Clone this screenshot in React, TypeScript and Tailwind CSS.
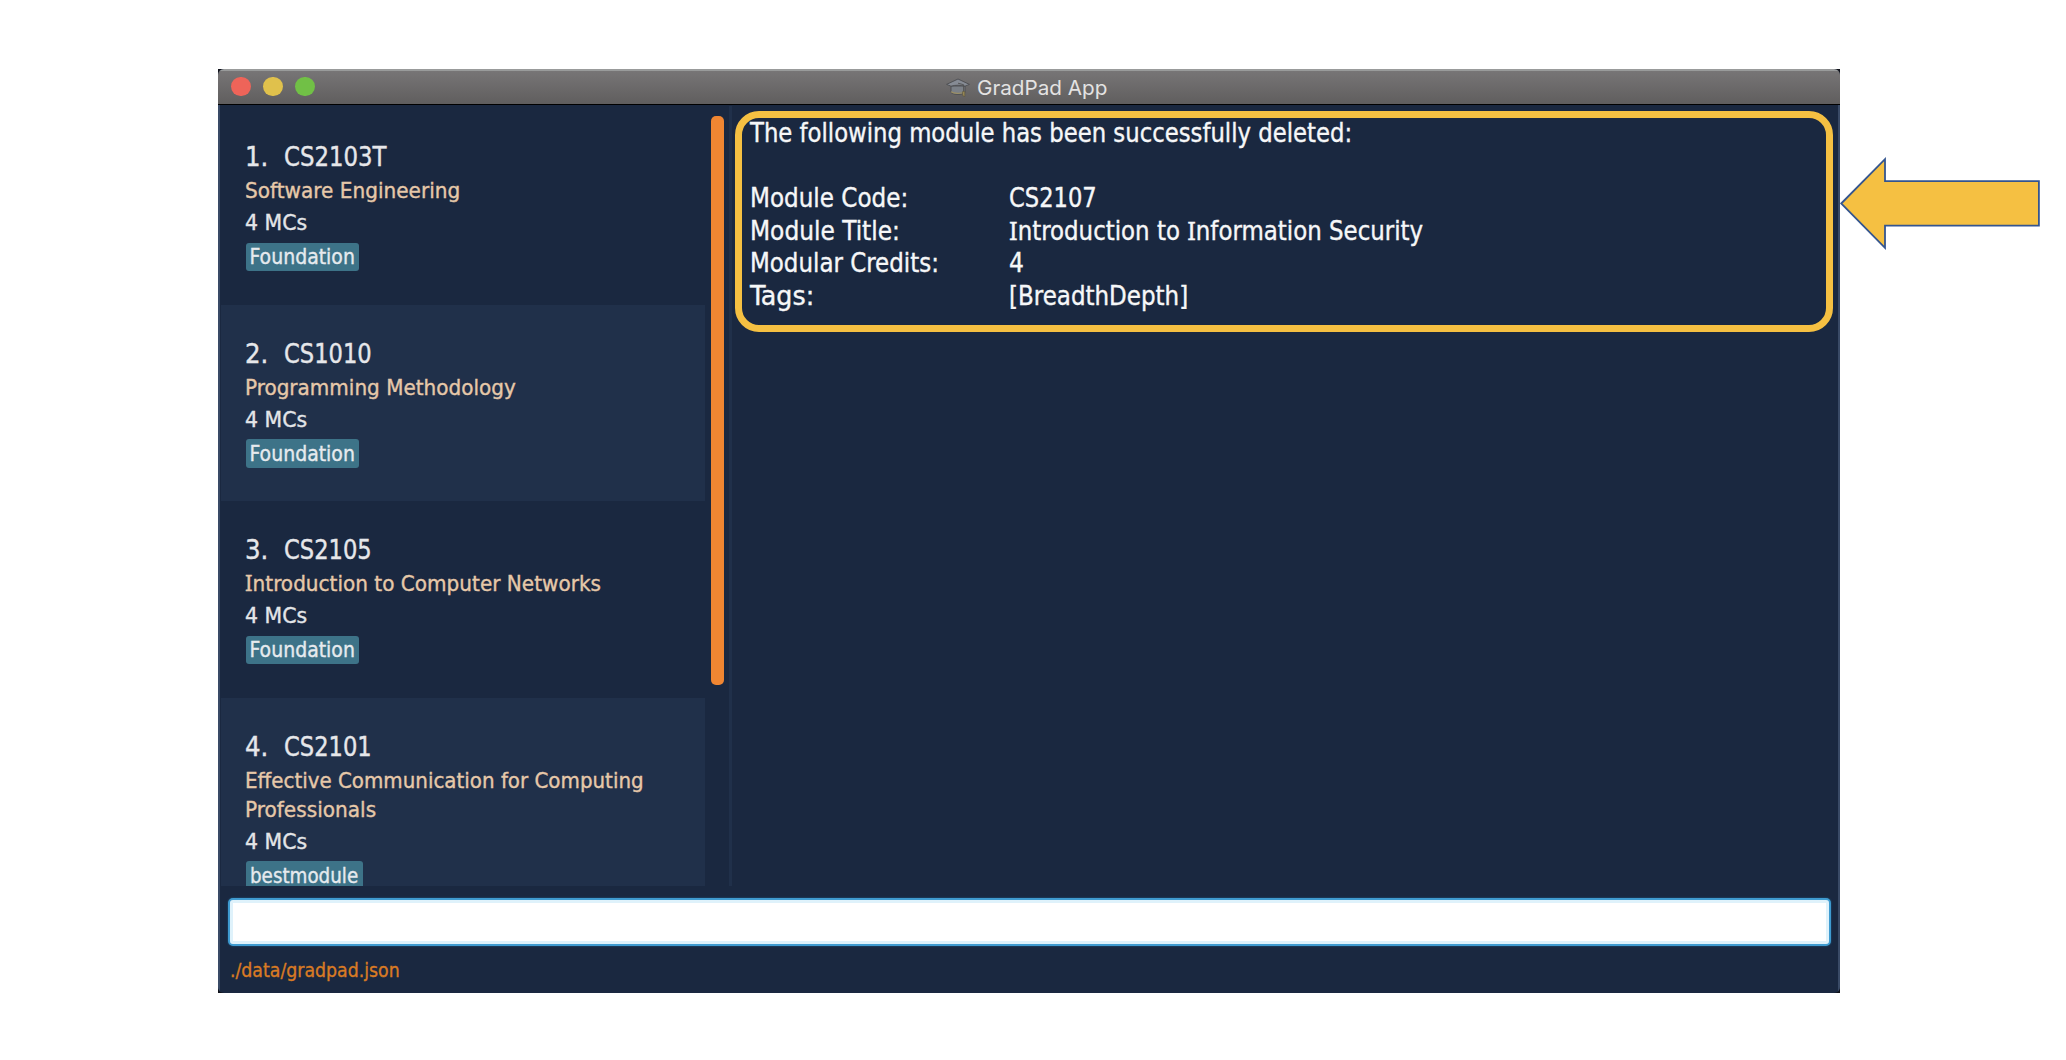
import { useLayoutEffect, useRef, useState } from "react";
import type { ReactNode } from "react";

/** Text squeezed or stretched horizontally to an exact advance width. */
function Fit({ width, children }: { width: number; children: ReactNode }) {
  const ref = useRef<HTMLSpanElement>(null);
  const [scale, setScale] = useState(1);
  useLayoutEffect(() => {
    if (ref.current) setScale(width / ref.current.offsetWidth);
  }, [width]);
  return (
    <span className="block whitespace-nowrap" style={{ width }}>
      <span ref={ref} className="inline-block origin-left whitespace-pre" style={{ transform: `scaleX(${scale})` }}>
        {children}
      </span>
    </span>
  );
}

const SerifI = () => <span className="font-['Noto_Sans'] leading-none">I</span>;

type Line = { text: ReactNode; width: number };
type Module = { index: string; code: Line; title: Line[]; tag: Line; tagWidth: string };

const modules: Module[] = [
  {
    index: "1.",
    code: { text: "CS2103T", width: 102.5 },
    title: [{ text: "Software Engineering", width: 215 }],
    tag: { text: "Foundation", width: 105 },
    tagWidth: "w-[113.5px]",
  },
  {
    index: "2.",
    code: { text: "CS1010", width: 88 },
    title: [{ text: "Programming Methodology", width: 271 }],
    tag: { text: "Foundation", width: 105 },
    tagWidth: "w-[113.5px]",
  },
  {
    index: "3.",
    code: { text: "CS2105", width: 88 },
    title: [{ text: <><SerifI />ntroduction to Computer Networks</>, width: 356.5 }],
    tag: { text: "Foundation", width: 105 },
    tagWidth: "w-[113.5px]",
  },
  {
    index: "4.",
    code: { text: "CS2101", width: 88 },
    title: [
      { text: "Effective Communication for Computing", width: 398.5 },
      { text: "Professionals", width: 131 },
    ],
    tag: { text: "bestmodule", width: 108.5 },
    tagWidth: "w-[117.5px]",
  },
];

const result: { label: Line; value: Line }[] = [
  { label: { text: "Module Code:", width: 158 }, value: { text: "CS2107", width: 88 } },
  {
    label: { text: "Module Title:", width: 149.5 },
    value: { text: <><SerifI />ntroduction to <SerifI />nformation Security</>, width: 414.5 },
  },
  { label: { text: "Modular Credits:", width: 188.5 }, value: { text: "4", width: 15 } },
  { label: { text: "Tags:", width: 64 }, value: { text: "[BreadthDepth]", width: 179 } },
];

function Card({ m, shaded }: { m: Module; shaded: boolean }) {
  return (
    <div
      className={`h-[196.5px] shrink-0 pl-[24px] pt-[33.3px] last:h-[226px] ${shaded ? "bg-[#20304a]" : "bg-[#1a2840]"}`}
    >
      <div className="flex h-8 text-[26px] leading-8 text-[#e6e7ea]">
        <div className="w-[38.5px]">
          <Fit width={23}>{m.index}</Fit>
        </div>
        <Fit width={m.code.width}>{m.code.text}</Fit>
      </div>
      <div className="mt-[3px] text-[22px] leading-[29.3px] text-[#e6c8a9]">
        {m.title.map((l, i) => (
          <div key={i} className="h-[29.3px]">
            <Fit width={l.width}>{l.text}</Fit>
          </div>
        ))}
      </div>
      <div className="mt-[2.9px] h-[29px] text-[22px] leading-[29px] text-[#e3e5e8]">
        <Fit width={62}>4 MCs</Fit>
      </div>
      <div
        className={`ml-[0.5px] mt-[5.2px] h-[28.7px] rounded-[3px] bg-[#3d7388] pl-[4px] pt-[0.8px] text-[21px] leading-[28.7px] text-[#e6eaee] ${m.tagWidth}`}
      >
        <Fit width={m.tag.width}>{m.tag.text}</Fit>
      </div>
    </div>
  );
}

function CapIcon() {
  return (
    <svg viewBox="0 0 24 20" className="h-[20px] w-[24px]">
      <path d="M5 8v6.5c3 2.6 11 2.6 14 0V8z" fill="#7b8087" stroke="#4c4d50" strokeWidth="0.9" />
      <path d="M5 13.8c3 2 10 2.2 13.6 .2" fill="none" stroke="#9b8e64" strokeWidth="1.2" />
      <path d="M12 1 23.4 6.4 19 8.2C15 6.9 9 6.9 5 8.2L.6 6.4z" fill="#868b94" stroke="#4c4d50" strokeWidth="0.9" />
      <path d="M12 5.2l5.6 1.5v7" fill="none" stroke="#505050" strokeWidth="0.9" />
      <path d="M16.6 13.6h2.2v5l-2-.9z" fill="#a08f58" stroke="#5c5640" strokeWidth="0.7" />
    </svg>
  );
}

export default function App() {
  return (
    <div className="flex h-[1060px] w-[2066px] items-start overflow-hidden bg-white pl-[218px] pt-[69px] font-['DejaVu_Sans_Condensed','DejaVu_Sans',sans-serif] [-webkit-text-stroke:0.35px]">
      <div className="h-[924px] w-[1622px] shrink-0 bg-[#10121a]">
        <div className="flex h-full w-full flex-col overflow-hidden rounded-[6px] bg-[#1a2840]">
          <header className="relative flex h-[36px] shrink-0 items-center border-b border-t-2 border-b-black border-t-[#999b9b] bg-linear-to-b from-[#777576] to-[#605e5e]">
            <div className="flex gap-[12.5px] pb-[1.6px] pl-[13px]">
              <span className="h-[19.5px] w-[19.5px] rounded-full bg-[#ee6459]" />
              <span className="h-[19.5px] w-[19.5px] rounded-full bg-[#e0c14c]" />
              <span className="h-[19.5px] w-[19.5px] rounded-full bg-[#71c046]" />
            </div>
            <div className="absolute left-[728px] top-[4px] flex items-center gap-[6.5px] font-['Inter',sans-serif] text-[20.3px] leading-[25px] text-[#e4e3e3] [-webkit-text-stroke:0px]">
              <CapIcon />
              <Fit width={130.5}>GradPad App</Fit>
            </div>
          </header>

          <div className="flex min-h-0 flex-1 flex-col border-x-2 border-[#394a66]">
            <main className="flex h-[781px] shrink-0">
              <section className="flex w-[509px] pl-[1px] pt-[3px]">
                <div className="flex h-[778px] w-[484px] flex-col overflow-hidden">
                  {modules.map((m, i) => (
                    <Card key={m.index} m={m} shaded={i % 2 === 1} />
                  ))}
                </div>
                <div className="ml-[6px] mt-[8px] h-[568.5px] w-[13px] rounded-[5px] bg-[#f08632]" />
              </section>
              <div className="mt-[1px] w-[3px] bg-[#20304a]" />
              <section className="relative flex-1 pl-[17.5px] pt-[12px] text-[26px] leading-[32.5px] text-[#f6f7f8]">
                <div className="absolute left-[3px] top-[6px] h-[221px] w-[1098px] rounded-[24px] border-[7px] border-[#f5c042]" />
                <Fit width={602.5}>The following module has been successfully deleted:</Fit>
                <div className="h-[32.5px]" />
                {result.map((r, i) => (
                  <div key={i} className="flex h-[32.5px]">
                    <div className="w-[259.5px]">
                      <Fit width={r.label.width}>{r.label.text}</Fit>
                    </div>
                    <Fit width={r.value.width}>{r.value.text}</Fit>
                  </div>
                ))}
              </section>
            </main>
            <div className="ml-[8px] mt-[12px] h-[48px] w-[1603px] rounded-[5px] border-2 border-[#3f9bd0] bg-white shadow-[0_0_2px_#1f618c,inset_0_0_0_3px_#dff2fb]" />
            <footer className="ml-[9.5px] mt-[11px] h-[28px] text-[19.5px] leading-[28px] text-[#d97b24]">
              <Fit width={170}>./data/gradpad.json</Fit>
            </footer>
          </div>
        </div>
      </div>
      <svg viewBox="0 0 202 96" className="mt-[86px] h-[96px] w-[202px] shrink-0">
        <path
          d="M1.2 48.5 45 4.2V26.2H198.9V70.6H45V92.8z"
          fill="#f5c042"
          stroke="#34558f"
          strokeWidth="1.8"
        />
      </svg>
    </div>
  );
}
